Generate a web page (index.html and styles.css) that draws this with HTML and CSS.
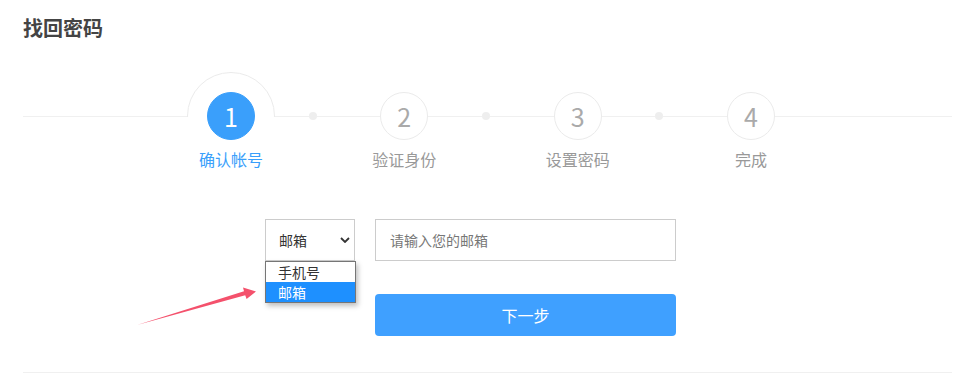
FILE: index.html
```html
<!DOCTYPE html>
<html lang="zh-CN">
<head>
  <meta charset="UTF-8" />
  <meta name="viewport" content="width=device-width, initial-scale=1.0"/>
  <title>找回密码</title>
  <link rel="stylesheet" href="styles.css">
</head>
<body>
  <div class="page">
    <h1 class="title">找回密码</h1>

    <div class="steps">
      <div class="step active">
        <div class="step-num">1</div>
        <div class="step-label">确认帐号</div>
      </div>
      <div class="step">
        <div class="step-num">2</div>
        <div class="step-label">验证身份</div>
      </div>
      <div class="step">
        <div class="step-num">3</div>
        <div class="step-label">设置密码</div>
      </div>
      <div class="step">
        <div class="step-num">4</div>
        <div class="step-label">完成</div>
      </div>
    </div>

    <form class="find-form" onsubmit="return false">
      <div class="select-wrap">
        <div class="select">
          <span>邮箱</span>
          <svg class="chevron" width="10" height="6" viewBox="0 0 10 6">
            <path d="M1 1 L5 5 L9 1" fill="none" stroke="#333" stroke-width="1.8"/>
          </svg>
        </div>
        <ul class="select-menu">
          <li>手机号</li>
          <li class="selected">邮箱</li>
        </ul>
      </div>
      <input class="field" type="text" placeholder="请输入您的邮箱">
      <button class="btn-next" type="button">下一步</button>
    </form>

    <div class="divider"></div>
  </div>

  <!-- annotation arrow -->
  <svg class="pointer-arrow" width="959" height="375" viewBox="0 0 959 375">
    <polygon points="137,325 244,291.3 243,287.6 256,291.5 246.6,299 245.2,295.2" fill="#f4516c"/>
  </svg>
</body>
</html>
```

FILE: styles.css
```css
body {
  margin: 0;
  position: relative;
  font-family: "Noto Sans CJK SC", "Noto Sans", sans-serif;
  background: #fff;
  color: #333;
}

.page {
  padding: 14px 7px 0 23px;
}

.title {
  margin: 0;
  font-size: 20px;
  font-weight: bold;
  line-height: 28px;
  color: #444;
}

/* steps */
.steps {
  position: relative;
  display: flex;
  margin-top: 50px;
  padding-left: 121.33px;
}

.steps::before {
  content: "";
  position: absolute;
  left: 0;
  right: 0;
  top: 24px;
  height: 1px;
  background: #f0f0f0;
}

.step {
  position: relative;
  width: 173.33px;
  display: flex;
  flex-direction: column;
  align-items: center;
}

.step::after {
  content: "";
  position: absolute;
  top: 20px;
  left: calc(100% - 9px);
  width: 8px;
  height: 8px;
  border-radius: 50%;
  background: #eee;
}

.step:last-child::after {
  display: none;
}

.step.active::before {
  content: "";
  position: absolute;
  top: -20px;
  left: 50%;
  margin-left: -44px;
  width: 86px;
  height: 86px;
  border: 1px solid #ebebeb;
  border-radius: 50%;
  background: #fff;
  clip-path: inset(0 0 43px 0);
}

.step-num {
  position: relative;
  z-index: 1;
  width: 46px;
  height: 46px;
  border: 1px solid #ebebeb;
  border-radius: 50%;
  background: #fff;
  color: #aaa;
  font-size: 25px;
  line-height: 46px;
  text-align: center;
}

.step.active .step-num {
  background: #3a9ffb;
  border-color: #3a9ffb;
  color: #fff;
}

.step-label {
  margin-top: 9px;
  font-size: 16px;
  line-height: 20px;
  color: #999;
}

.step.active .step-label {
  color: #3a9ffb;
}

/* form */
.find-form {
  display: grid;
  grid-template-columns: 90px 301px;
  column-gap: 20px;
  row-gap: 33px;
  margin: 50px 0 0 242px;
}

.select-wrap {
  position: relative;
}

.select {
  height: 42px;
  box-sizing: border-box;
  border: 1px solid #ccc;
  display: flex;
  align-items: center;
  justify-content: space-between;
  padding: 0 4px 0 13px;
  font-size: 14px;
  color: #333;
}

.select-menu {
  position: absolute;
  top: 100%;
  left: 0;
  z-index: 2;
  width: 91px;
  box-sizing: border-box;
  margin: 0;
  padding: 0;
  list-style: none;
  background: #fff;
  border: 1px solid #767676;
  box-shadow: 2px 3px 5px rgba(0,0,0,0.25);
}

.select-menu li {
  height: 20px;
  line-height: 20px;
  padding-left: 12px;
  font-size: 14px;
  color: #333;
}

.select-menu li.selected {
  background: #1e90ff;
  color: #fff;
}

.field {
  height: 42px;
  box-sizing: border-box;
  border: 1px solid #ccc;
  padding: 0 14px;
  font-family: inherit;
  font-size: 14px;
  color: #333;
  outline: none;
}

.field::placeholder {
  color: #777;
}

.btn-next {
  grid-column: 2;
  height: 42px;
  border: none;
  border-radius: 4px;
  background: #3fa0ff;
  color: #fff;
  font-family: inherit;
  font-size: 16px;
  cursor: pointer;
}

.divider {
  margin-top: 36px;
  height: 1px;
  background: #f0f0f0;
}

.pointer-arrow {
  position: absolute;
  left: 0;
  top: 0;
  pointer-events: none;
}
```
